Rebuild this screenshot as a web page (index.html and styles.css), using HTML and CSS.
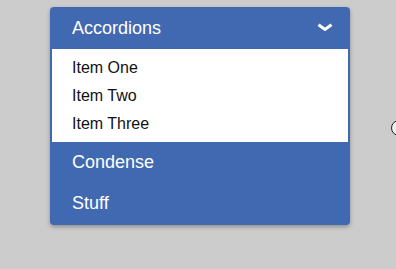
FILE: index.html
```html
<!DOCTYPE html>
<html>
<head>
<meta charset="utf-8">
<link rel="stylesheet" href="styles.css">
</head>
<body>
<div class="accordion">
  <div class="acc-header">
    <span>Accordions</span>
    <svg class="chev" width="16" height="9" viewBox="0 0 16 9"><polyline points="1.5,1.8 8,6.5 14.5,1.8" fill="none" stroke="#fff" stroke-width="3"/></svg>
  </div>
  <ul class="acc-body">
    <li>Item One</li>
    <li>Item Two</li>
    <li>Item Three</li>
  </ul>
  <div class="acc-row">Condense</div>
  <div class="acc-row last">Stuff</div>
</div>
<div class="dot"></div>
</body>
</html>
```
FILE: styles.css
```css
html, body {
  margin: 0;
  padding: 0;
  background: #cccccc;
  width: 396px;
  height: 269px;
  overflow: hidden;
  font-family: "Liberation Sans", Arial, sans-serif;
}
body {
  padding: 7px 0 0 50px;
  box-sizing: border-box;
  position: relative;
}
.accordion {
  width: 300px;
  background: #4169b2;
  border-radius: 4px;
  box-shadow: 0 2px 4px rgba(0,0,0,0.3);
  color: #fff;
}
.acc-header {
  height: 42px;
  display: flex;
  align-items: center;
  justify-content: space-between;
  padding: 1px 17px 0 22px;
  box-sizing: border-box;
  font-size: 18px;
}
.chev {
  display: block;
  margin-top: -2px;
}
.acc-body {
  list-style: none;
  margin: 0 2px;
  padding: 5px 0 4px 20px;
  background: #fff;
  color: #111;
  font-size: 16px;
}
.acc-body li {
  line-height: 28px;
}
.acc-row {
  height: 40px;
  line-height: 40px;
  padding-left: 22px;
  font-size: 18px;
}
.acc-row.last {
  height: 43px;
  line-height: 42px;
}
.dot {
  position: absolute;
  left: 391px;
  top: 120px;
  width: 14px;
  height: 14px;
  border: 1px solid #222;
  border-radius: 50%;
  background: #eeeeee;
}
```
